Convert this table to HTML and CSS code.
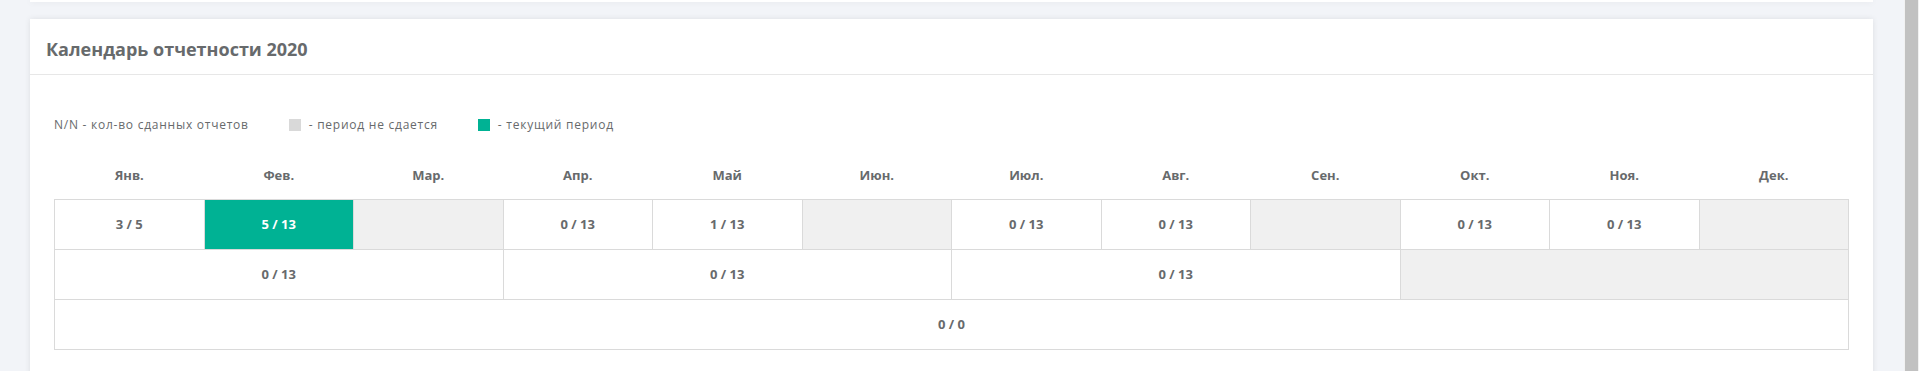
FILE: index.html
```html
<!DOCTYPE html>
<html lang="ru">
<head>
<meta charset="utf-8">
<title>Календарь отчетности 2020</title>
<link rel="stylesheet" href="styles.css">
</head>
<body>
<div class="page">
  <div class="card card-top"></div>
  <div class="card">
    <div class="card-header">
      <h2 class="card-title">Календарь отчетности 2020</h2>
    </div>
    <div class="card-body">
      <div class="legend">
        <span class="legend-item">N/N - кол-во сданных отчетов</span>
        <span class="legend-item"><i class="swatch swatch-off"></i>- период не сдается</span>
        <span class="legend-item"><i class="swatch swatch-current"></i>- текущий период</span>
      </div>
      <table class="cal">
        <thead>
          <tr>
            <th>Янв.</th><th>Фев.</th><th>Мар.</th><th>Апр.</th><th>Май</th><th>Июн.</th>
            <th>Июл.</th><th>Авг.</th><th>Сен.</th><th>Окт.</th><th>Ноя.</th><th>Дек.</th>
          </tr>
        </thead>
        <tbody>
          <tr>
            <td>3 / 5</td>
            <td class="current">5 / 13</td>
            <td class="off"></td>
            <td>0 / 13</td>
            <td>1 / 13</td>
            <td class="off"></td>
            <td>0 / 13</td>
            <td>0 / 13</td>
            <td class="off"></td>
            <td>0 / 13</td>
            <td>0 / 13</td>
            <td class="off"></td>
          </tr>
          <tr>
            <td colspan="3">0 / 13</td>
            <td colspan="3">0 / 13</td>
            <td colspan="3">0 / 13</td>
            <td colspan="3" class="off"></td>
          </tr>
          <tr>
            <td colspan="12">0 / 0</td>
          </tr>
        </tbody>
      </table>
    </div>
  </div>
</div>
<div class="scrollbar"><div class="scrollbar-thumb"></div></div>
</body>
</html>
```

FILE: styles.css
```css
html, body {
  margin: 0;
  padding: 0;
  height: 100%;
  overflow: hidden;
}

body {
  background: #f2f4f8;
  font-family: "Open Sans", "Liberation Sans", Arial, sans-serif;
  color: #676a6c;
}

.page {
  padding: 0 46px 0 30px;
}

.card {
  background: #fff;
  box-shadow: 0 0 6px rgba(0, 0, 0, 0.09);
}

.card-top {
  height: 2px;
  margin-bottom: 17px;
}

.card-header {
  padding: 18px 16px 13px;
  border-bottom: 1px solid #e7e7e7;
}

.card-title {
  margin: 0;
  font-size: 18px;
  line-height: 24px;
  font-weight: 700;
  color: #676a6c;
}

.card-body {
  padding: 41px 24px 40px;
}

.legend {
  display: flex;
  align-items: center;
  height: 18px;
  font-size: 12px;
  line-height: 18px;
  letter-spacing: 0.75px;
  color: #676a6c;
}

.legend-item {
  display: flex;
  align-items: center;
  margin-right: 40px;
}

.swatch {
  display: inline-block;
  width: 12px;
  height: 12px;
  margin-right: 8px;
}

.swatch-off {
  background: #d9d9d9;
}

.swatch-current {
  background: #00b294;
}

.cal {
  width: 100%;
  border-collapse: collapse;
  table-layout: fixed;
  font-size: 13px;
  font-weight: 700;
  color: #676a6c;
}

.cal th {
  padding: 31px 0 14px;
  line-height: 20px;
  text-align: center;
  font-weight: 700;
}

.cal td {
  padding: 14px 0;
  line-height: 21px;
  text-align: center;
  border: 1px solid #dadada;
}

.cal td.off {
  background: #f0f0f0;
}

.cal td.current {
  background: #00b294;
  color: #fff;
}

.scrollbar {
  position: fixed;
  top: 0;
  right: 0;
  width: 15px;
  height: 100%;
  background: #f1f1f1;
}

.scrollbar-thumb {
  height: 100%;
  margin: 0 1px;
  background: #c1c1c1;
}
```
